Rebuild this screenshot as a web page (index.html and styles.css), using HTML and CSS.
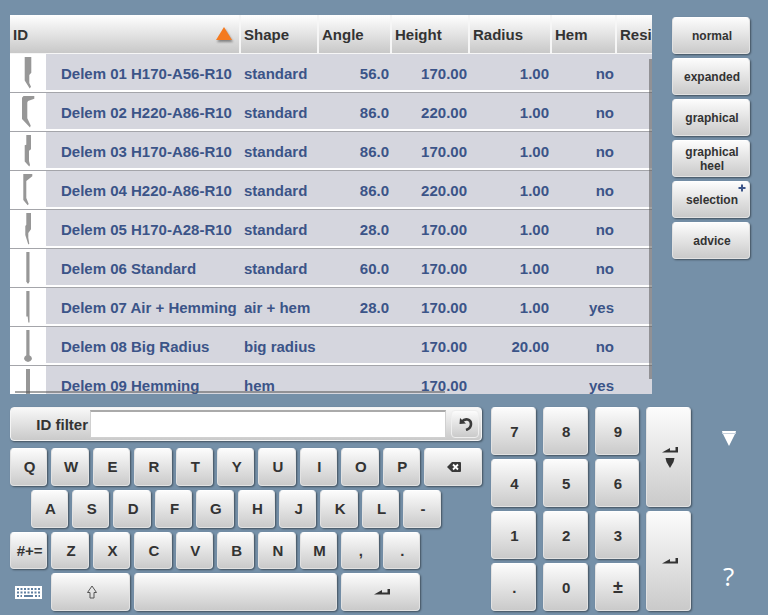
FILE: index.html
```html
<!DOCTYPE html>
<html lang="en">

<head>
    <meta charset="UTF-8">
    <meta name="viewport" content="width=device-width, initial-scale=1">
    <title>Punch library</title>
    <link rel="stylesheet" href="styles.css">
</head>

<body>
    <!-- tool list and view buttons -->
    <main class="library">
        <div class="list">
            <div class="list-scroll">
                <table class="tools">
                    <colgroup>
                        <col class="col-icon">
                        <col class="col-id">
                        <col class="col-shape">
                        <col class="col-angle">
                        <col class="col-height">
                        <col class="col-radius">
                        <col class="col-hem">
                        <col class="col-resistance">
                    </colgroup>
                    <thead>
                        <tr>
                            <th colspan="2">
                                <div class="sorted">ID
                                    <svg class="sort" width="20" height="18" viewBox="0 0 20 18"><path d="M10 2 L18 15 H2 Z" fill="#f47a20"/></svg>
                                </div>
                            </th>
                            <th>Shape</th>
                            <th>Angle</th>
                            <th>Height</th>
                            <th>Radius</th>
                            <th>Hem</th>
                            <th>Resi</th>
                        </tr>
                    </thead>
                    <tbody>
                        <tr>
                            <td class="icon"><svg viewBox="0 0 36 36"><path d="M14.7 2H21.3V17.7L19.3 20V28L21 31.7L19.7 33.5L14.7 25.5Z"/></svg></td>
                            <td class="name">Delem 01 H170-A56-R10</td>
                            <td>standard</td>
                            <td class="num">56.0</td>
                            <td class="num">170.00</td>
                            <td class="num">1.00</td>
                            <td class="num">no</td>
                            <td></td>
                        </tr>
                        <tr>
                            <td class="icon"><svg viewBox="0 0 36 36"><path d="M12 3.7L13.5 2H24.3V4.7L18 7L17.3 8.5V24.3L20.7 31.5L20 33.5L12 25Z"/></svg></td>
                            <td class="name">Delem 02 H220-A86-R10</td>
                            <td>standard</td>
                            <td class="num">86.0</td>
                            <td class="num">220.00</td>
                            <td class="num">1.00</td>
                            <td class="num">no</td>
                            <td></td>
                        </tr>
                        <tr>
                            <td class="icon"><svg viewBox="0 0 36 36"><path d="M16.3 2H21V16.3L19 17.7V28L20 32L19.3 33.5L14.7 28.5V12.3L16.3 11.7Z"/></svg></td>
                            <td class="name">Delem 03 H170-A86-R10</td>
                            <td>standard</td>
                            <td class="num">86.0</td>
                            <td class="num">170.00</td>
                            <td class="num">1.00</td>
                            <td class="num">no</td>
                            <td></td>
                        </tr>
                        <tr>
                            <td class="icon"><svg viewBox="0 0 36 36"><path d="M13.3 2H22.3V4.3L16.3 9V26L18.7 32L17.7 33.3L13.3 28Z"/></svg></td>
                            <td class="name">Delem 04 H220-A86-R10</td>
                            <td>standard</td>
                            <td class="num">86.0</td>
                            <td class="num">220.00</td>
                            <td class="num">1.00</td>
                            <td class="num">no</td>
                            <td></td>
                        </tr>
                        <tr>
                            <td class="icon"><svg viewBox="0 0 36 36"><path d="M16.3 2H21V18.3L18.3 22V26.7L19.3 32.7L18.3 33.5L15.3 24V15L16.3 13.7Z"/></svg></td>
                            <td class="name">Delem 05 H170-A28-R10</td>
                            <td>standard</td>
                            <td class="num">28.0</td>
                            <td class="num">170.00</td>
                            <td class="num">1.00</td>
                            <td class="num">no</td>
                            <td></td>
                        </tr>
                        <tr>
                            <td class="icon"><svg viewBox="0 0 36 36"><path d="M16.3 2H19.5V31.5L18.5 33.5H17.5L16.3 31.5Z"/></svg></td>
                            <td class="name">Delem 06 Standard</td>
                            <td>standard</td>
                            <td class="num">60.0</td>
                            <td class="num">170.00</td>
                            <td class="num">1.00</td>
                            <td class="num">no</td>
                            <td></td>
                        </tr>
                        <tr>
                            <td class="icon"><svg viewBox="0 0 36 36"><path d="M16.3 2H19.5V33.5H18.3L17.7 27.5H16.3Z"/></svg></td>
                            <td class="name">Delem 07 Air + Hemming</td>
                            <td>air + hem</td>
                            <td class="num">28.0</td>
                            <td class="num">170.00</td>
                            <td class="num">1.00</td>
                            <td class="num">yes</td>
                            <td></td>
                        </tr>
                        <tr>
                            <td class="icon"><svg viewBox="0 0 36 36"><path d="M16.3 2H19.5V27.3Q22 28.5 22 31Q21 33.5 18 34Q15 33.5 14 31Q14 28.5 16.3 27.3Z"/></svg></td>
                            <td class="name">Delem 08 Big Radius</td>
                            <td>big radius</td>
                            <td class="num"></td>
                            <td class="num">170.00</td>
                            <td class="num">20.00</td>
                            <td class="num">no</td>
                            <td></td>
                        </tr>
                        <tr>
                            <td class="icon"><svg viewBox="0 0 36 36"><path d="M16 2H20V34H16Z"/></svg></td>
                            <td class="name">Delem 09 Hemming</td>
                            <td>hem</td>
                            <td class="num"></td>
                            <td class="num">170.00</td>
                            <td class="num"></td>
                            <td class="num">yes</td>
                            <td></td>
                        </tr>
                    </tbody>
                </table>
            </div>
            <div class="bar bar-vertical"></div>
            <div class="bar bar-horizontal"></div>
        </div>

        <nav class="views">
            <button type="button">normal</button>
            <button type="button">expanded</button>
            <button type="button">graphical</button>
            <button type="button">graphical heel</button>
            <button type="button">selection<svg class="plus" width="8" height="8" viewBox="0 0 8 8"><path d="M4 .5V7.5M.5 4H7.5" stroke="#3b5488" stroke-width="2"/></svg></button>
            <button type="button">advice</button>
        </nav>
    </main>

    <!-- on-screen keyboard -->
    <footer class="input-area">
        <div class="keyboard">
            <form class="filter">
                <label for="idFilter">ID filter</label>
                <input type="text" id="idFilter">
                <button type="reset" aria-label="Reset filter">
                    <svg width="14" height="14" viewBox="0 0 14 14"><path d="M3 4.5C6 1 12 2 12 7C12 10 10 12 7 13" fill="none" stroke="#3a3a3a" stroke-width="2.6"/><path d="M0.5 7L1 1L7 6.5Z" fill="#3a3a3a"/></svg>
                </button>
            </form>

            <div class="keys">
                <button type="button">Q</button>
                <button type="button">W</button>
                <button type="button">E</button>
                <button type="button">R</button>
                <button type="button">T</button>
                <button type="button">Y</button>
                <button type="button">U</button>
                <button type="button">I</button>
                <button type="button">O</button>
                <button type="button">P</button>
                <button type="button" class="backspace" aria-label="Backspace">
                    <svg width="14" height="10" viewBox="0 0 14 10"><path d="M0 5L5 0H13Q14 0 14 1V9Q14 10 13 10H5Z" fill="#3a3a3a"/><path d="M6 2.5L11 7.5M11 2.5L6 7.5" stroke="#fff" stroke-width="1.8"/></svg>
                </button>

                <button type="button" class="indent">A</button>
                <button type="button">S</button>
                <button type="button">D</button>
                <button type="button">F</button>
                <button type="button">G</button>
                <button type="button">H</button>
                <button type="button">J</button>
                <button type="button">K</button>
                <button type="button">L</button>
                <button type="button">-</button>

                <button type="button" class="first">#+=</button>
                <button type="button">Z</button>
                <button type="button">X</button>
                <button type="button">C</button>
                <button type="button">V</button>
                <button type="button">B</button>
                <button type="button">N</button>
                <button type="button">M</button>
                <button type="button">,</button>
                <button type="button">.</button>

                <button type="button" class="plain first" aria-label="Hide keyboard">
                    <svg width="27" height="13" viewBox="0 0 27 13"><rect width="27" height="13" fill="#fff"/><path d="M2 3H25M2 6.5H25M2 10H7M20 10H25" stroke="#5f7fa0" stroke-width="2" stroke-dasharray="2 1.5"/><path d="M9 10H18" stroke="#5f7fa0" stroke-width="2"/></svg>
                </button>
                <button type="button" class="wide" aria-label="Shift">
                    <svg width="12" height="14" viewBox="0 0 12 14"><path d="M6 1L10.5 7.5H8V13H4V7.5H1.5Z" fill="none" stroke="#555"/></svg>
                </button>
                <button type="button" class="space" aria-label="Space"></button>
                <button type="button" class="wide" aria-label="Enter">
                    <svg width="16" height="6" viewBox="0 0 16 6"><path d="M0 5.5L8 1V3.5H13.5V0H16V5.5Z" fill="#333"/></svg>
                </button>
            </div>
        </div>

        <div class="numpad">
            <button type="button">7</button>
            <button type="button">8</button>
            <button type="button">9</button>
            <button type="button" class="tall" aria-label="Enter and next">
                <svg width="16" height="21" viewBox="0 0 16 21"><path d="M0 5.5L8 1V3.5H13.5V0H16V5.5Z" fill="#333"/><path d="M3.5 11H12.5L11.5 15L8 21L4.5 15Z" fill="#333"/></svg>
            </button>
            <button type="button">4</button>
            <button type="button">5</button>
            <button type="button">6</button>
            <button type="button">1</button>
            <button type="button">2</button>
            <button type="button">3</button>
            <button type="button" class="tall" aria-label="Enter">
                <svg width="16" height="6" viewBox="0 0 16 6"><path d="M0 5.5L8 1V3.5H13.5V0H16V5.5Z" fill="#333"/></svg>
            </button>
            <button type="button">.</button>
            <button type="button">0</button>
            <button type="button" class="sign">±</button>
        </div>

        <div class="extra">
            <button type="button" class="plain" aria-label="Minimize">
                <svg width="14" height="15" viewBox="0 0 14 15"><path d="M0 0H14L13.5 2H0.5ZM1 3H13L7 15Z" fill="#fff"/><path d="M0 2.5H14" stroke="#c5d0dc"/></svg>
            </button>
            <button type="button" class="plain help">?</button>
        </div>
    </footer>
</body>

</html>
```

FILE: styles.css
```css
* {
    box-sizing: border-box;
}

body {
    display: flex;
    flex-direction: column;
    gap: 13px;
    height: 100vh;
    margin: 0;
    padding: 15px 0 4px 10px;
    background-color: #7590a8;
    color: #333;
    font: bold 15px "Liberation Sans", Arial, sans-serif;
}

button {
    position: relative;
    display: flex;
    align-items: center;
    justify-content: center;
    min-width: 0;
    padding: 0 0 0 2px;
    border: 1px solid #e2e2e2;
    border-top-color: #fff;
    border-radius: 4px;
    background: linear-gradient(#fcfcfc, #cacaca);
    box-shadow: 1px 1px 2px rgba(0, 0, 0, 0.45);
    color: #333;
    font: inherit;
    cursor: pointer;
}

.plain {
    padding: 0;
    border: none;
    background: none;
    box-shadow: none;
}

/* tool list */
.library {
    display: flex;
    flex: 1;
    gap: 20px;
    min-height: 0;
    padding-right: 18px;
}

.list {
    position: relative;
    flex: 1;
    min-width: 0;
    background-color: #d5d6de;
}

.list-scroll {
    height: 100%;
    overflow: auto;
    scrollbar-width: none;
}

.tools {
    width: 100%;
    min-width: 642px;
    table-layout: fixed;
    border-collapse: separate;
    border-spacing: 0;
    white-space: nowrap;
}

.col-icon {
    width: 36px;
}

.col-id {
    width: 195px;
}

.col-shape {
    width: 78px;
}

.col-angle {
    width: 73px;
}

.col-height {
    width: 78px;
}

.col-radius {
    width: 82px;
}

.col-hem {
    width: 65px;
}

.tools th {
    position: sticky;
    top: 0;
    height: 39px;
    padding: 0 0 0 3px;
    border-right: 2px solid #f6f6f6;
    border-bottom: 1px solid #f6f6f6;
    background: linear-gradient(#fff, #c8c8c8);
    text-align: left;
}

.tools th:last-child {
    border-right: none;
}

.sorted {
    display: flex;
    align-items: center;
    justify-content: space-between;
    padding-right: 5px;
}

.sort {
    filter: drop-shadow(1px 2px 1px rgba(0, 0, 0, 0.4));
}

.tools td {
    height: 39px;
    padding: 0 3px;
    border-bottom: 1px solid #a4a5aa;
    background: linear-gradient(#d5d6de 36px, #fff 36px);
    color: #3b5488;
}

.tools .icon {
    padding: 0;
    background: #fff;
}

.icon svg {
    display: block;
    width: 36px;
    height: 36px;
    fill: #979797;
}

.tools .name {
    padding-left: 15px;
}

.tools .num {
    text-align: right;
}

.bar {
    position: absolute;
    background-color: rgba(90, 90, 90, 0.55);
}

.bar-vertical {
    top: 44px;
    right: 0;
    bottom: 15px;
    width: 3px;
}

.bar-horizontal {
    left: 5px;
    bottom: 1px;
    width: 67%;
    height: 2px;
}

/* view buttons */
.views {
    display: flex;
    flex-direction: column;
    gap: 4px;
    width: 78px;
    padding-top: 2px;
}

.views button {
    height: 37px;
    padding: 0 8px 0 10px;
    font-size: 12px;
    line-height: 14px;
}

.plus {
    position: absolute;
    top: 2px;
    right: 3px;
}

/* keyboard */
.input-area {
    display: grid;
    grid-template-columns: 1fr 200px 57px;
    gap: 9px;
    padding-right: 11px;
}

.keyboard {
    display: flex;
    flex-direction: column;
    gap: 7px;
    min-width: 0;
}

.filter {
    display: flex;
    align-items: stretch;
    height: 34px;
    padding: 2px;
    border: 1px solid #f4f4f4;
    border-radius: 4px;
    background: linear-gradient(#f8f8f8, #cacaca);
    box-shadow: 1px 1px 2px rgba(0, 0, 0, 0.45);
}

.filter label {
    width: 77px;
    padding-right: 2px;
    line-height: 30px;
    text-align: right;
}

.filter input {
    flex: 1;
    min-width: 0;
    margin-right: 5px;
    padding: 0 6px;
    border: 1px solid #d0d0d0;
    border-top: 2px solid #aaa;
    background-color: #fff;
    color: #333;
    font: inherit;
}

.filter button {
    width: 28px;
    border-color: #eee;
    box-shadow: none;
}

/* every key spans two half columns, so rows can be shifted by half a key */
.keys {
    display: grid;
    flex: 1;
    grid-template-columns: repeat(23, minmax(0, 1fr));
    grid-auto-rows: 1fr;
    gap: 4px;
}

.keys button {
    grid-column-end: span 2;
}

.keys .backspace {
    grid-column-end: span 3;
}

.keys .indent {
    grid-column-start: 2;
}

.keys .first {
    grid-column-start: 1;
}

.keys .wide {
    grid-column-end: span 4;
}

.keys .space {
    grid-column-end: span 10;
}

.numpad {
    display: grid;
    grid-template-columns: repeat(4, 1fr);
    grid-auto-rows: 48px;
    gap: 4px 7px;
}

.tall {
    grid-column: 4;
    grid-row: span 2;
}

.sign {
    font-size: 18px;
}

.extra {
    display: flex;
    flex-direction: column;
    align-items: center;
    justify-content: space-between;
    padding: 24px 0 20px;
}

.help {
    color: #fff;
    font: 26px/30px "Open Sans", sans-serif;
}
```
